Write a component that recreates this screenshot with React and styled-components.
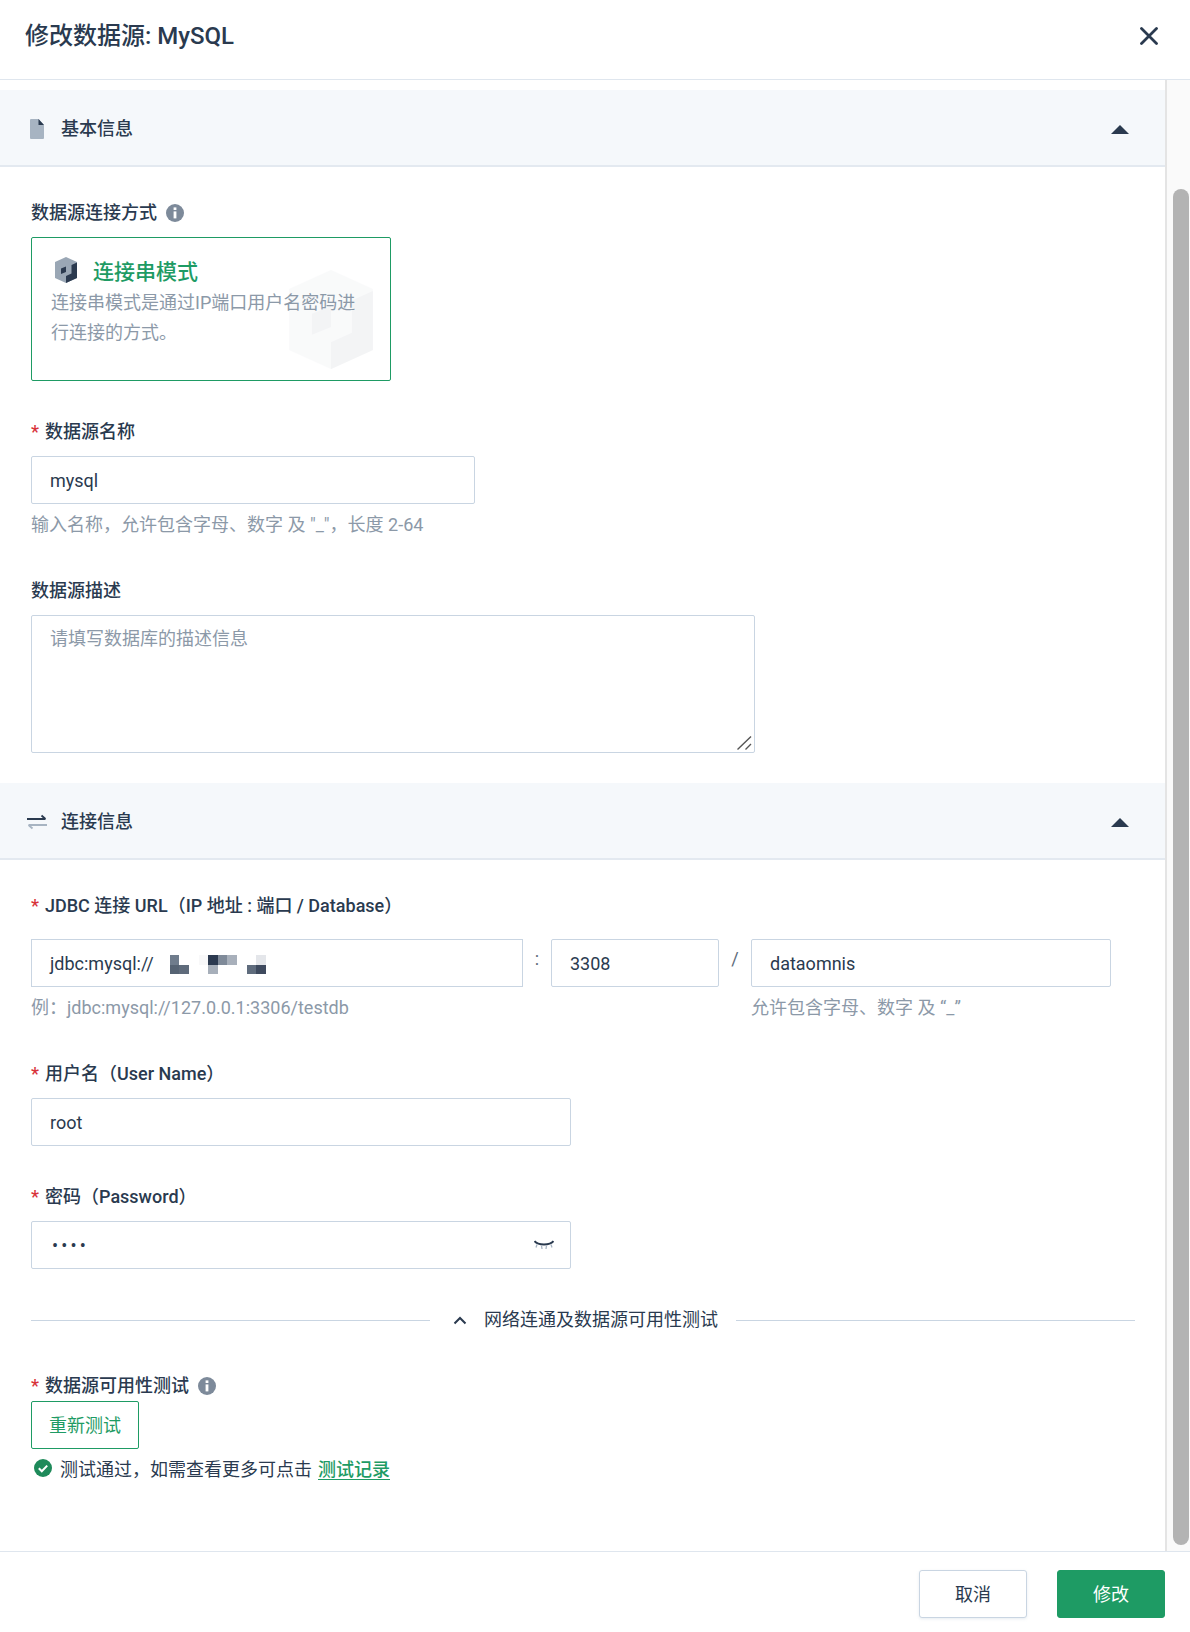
import styled, { createGlobalStyle } from 'styled-components';

const FONT = 'Roboto, "Noto Sans CJK SC", sans-serif';

const GlobalStyle = createGlobalStyle`
  html, body {
    margin: 0;
    padding: 0;
    background: #fff;
  }
  body {
    font-family: ${FONT};
    color: #2a3a4f;
    overflow: hidden;
  }
  * {
    box-sizing: border-box;
  }
`;

const Drawer = styled.div`
  display: flex;
  flex-direction: column;
  width: 1190px;
  height: 1632px;
  background: #fff;
`;

const Header = styled.header`
  display: flex;
  align-items: center;
  justify-content: space-between;
  flex: none;
  height: 80px;
  padding: 0 32px 8px 25px;
  border-bottom: 1px solid #dfe6ee;
`;

const Title = styled.h1`
  margin: 0;
  font-size: 24px;
  font-weight: 500;
  line-height: 32px;
  color: #2a3a4f;
`;

const Middle = styled.div`
  display: flex;
  flex: 1;
  min-height: 0;
`;

const Content = styled.main`
  flex: 1;
  min-width: 0;
  padding-top: 10px;
  border-right: 2px solid #e4e4e4;
`;

const ScrollTrack = styled.div`
  flex: none;
  width: 23px;
  padding: 109px 1px 6px 6px;
  background: #fafafa;
`;

const ScrollThumb = styled.div`
  height: 100%;
  border-radius: 8px;
  background: #b3b3b3;
`;

const SectionBar = styled.div`
  display: flex;
  align-items: center;
  height: 77px;
  padding: 2px 36px 0 0;
  background: #f5f8fb;
  border-bottom: 2px solid #e3e9f0;
`;

const SectionTitle = styled.span`
  flex: 1;
  font-size: 18px;
  font-weight: 500;
  line-height: 24px;
`;

const SectionBody = styled.section`
  padding: ${(p) => p.$top}px 30px ${(p) => p.$bottom}px 31px;
`;

const Field = styled.div`
  width: ${(p) => (p.$width ? `${p.$width}px` : 'auto')};
  margin-top: ${(p) => p.$top || 0}px;
`;

const Label = styled.div`
  display: flex;
  align-items: center;
  height: 24px;
  font-size: 18px;
  font-weight: 500;
  line-height: 24px;
  white-space: nowrap;
`;

const Star = styled.span`
  width: 14px;
  color: #d8333a;
`;

const Control = styled.div`
  margin-top: ${(p) => p.$top || 12}px;
`;

const TextInput = styled.input`
  display: block;
  width: 100%;
  height: 48px;
  padding: 0 18px;
  border: 1px solid #c9d5e2;
  border-radius: 2px;
  outline: none;
  background: #fff;
  font-family: ${FONT};
  font-size: 18px;
  color: #2a3a4f;
`;

const PasswordInput = styled(TextInput)`
  padding-left: 20px;
  letter-spacing: 3.2px;
`;

const AreaBox = styled.div`
  position: relative;
  margin-top: 12px;
`;

const Area = styled.textarea`
  display: block;
  width: 100%;
  height: 138px;
  padding: 9px 18px;
  border: 1px solid #c9d5e2;
  border-radius: 2px;
  outline: none;
  resize: none;
  font-family: ${FONT};
  font-size: 18px;
  line-height: 27px;
  color: #2a3a4f;
  &::placeholder {
    color: #8c99a8;
  }
`;

const ResizeGrip = styled.svg`
  position: absolute;
  right: 3px;
  bottom: 3px;
`;

const Help = styled.div`
  margin-top: 9px;
  font-size: 18px;
  line-height: 24px;
  white-space: nowrap;
  color: #8c99a8;
`;

const ModeCard = styled.div`
  position: relative;
  height: 144px;
  width: 360px;
  padding: 17px 20px 0 19px;
  overflow: hidden;
  border: 1px solid #1e9b64;
  border-radius: 2px;
`;

const ModeHead = styled.div`
  display: flex;
  align-items: center;
  gap: 16px;
  height: 30px;
  padding-left: 4px;
`;

const ModeName = styled.span`
  font-size: 21px;
  font-weight: 500;
  color: #1e9b64;
`;

const ModeText = styled.p`
  margin: 3px 0 0;
  font-size: 18px;
  line-height: 30px;
  color: #8c99a8;
`;

const Watermark = styled.svg`
  position: absolute;
  top: 32px;
  right: 16px;
  opacity: 0.05;
`;

const UrlGrid = styled.div`
  display: grid;
  grid-template-columns: 492px 28px 168px 32px 360px;
  margin-top: 21px;
`;

const Sep = styled.span`
  padding-top: 8px;
  font-size: 18px;
  line-height: 24px;
  text-align: center;
  color: #5e6b7b;
`;

const FakeInput = styled.div`
  display: flex;
  align-items: center;
  height: 48px;
  padding: 0 18px;
  border: 1px solid #c9d5e2;
  font-size: 18px;
  white-space: nowrap;
`;

const Mosaic = styled.div`
  display: grid;
  grid-template-columns: repeat(10, 9.6px);
  grid-auto-rows: 9.6px;
  margin-left: 16px;
  padding-top: 3px;
`;

const MosaicCell = styled.i`
  display: block;
  background: ${(p) => p.$color};
`;

const PasswordBox = styled.div`
  position: relative;
`;

const EyeButton = styled.svg`
  position: absolute;
  top: 19px;
  right: 17px;
`;

const DividerRow = styled.div`
  display: flex;
  align-items: center;
  height: 24px;
  margin-top: 39px;
`;

const DividerLine = styled.div`
  flex: 1;
  height: 1px;
  background: #c9d5e2;
`;

const DividerText = styled.div`
  display: flex;
  align-items: center;
  gap: 17px;
  padding: 0 18px 0 23px;
  font-size: 18px;
  line-height: 24px;
`;

const RetestButton = styled.button`
  display: block;
  width: 108px;
  height: 48px;
  margin-top: 3px;
  padding: 0 0 2px;
  border: 1px solid #1e9b64;
  border-radius: 2px;
  background: #fff;
  font-family: ${FONT};
  font-size: 18px;
  color: #1e9b64;
`;

const Status = styled.div`
  display: flex;
  align-items: center;
  gap: 8px;
  height: 24px;
  margin-top: 7px;
  padding-left: 3px;
  font-size: 18px;
`;

const TestLink = styled.a`
  margin-left: -2px;
  font-weight: 500;
  color: #1e9b64;
  text-decoration: underline;
  text-underline-offset: 3px;
`;

const Footer = styled.footer`
  display: flex;
  justify-content: flex-end;
  gap: 30px;
  flex: none;
  height: 81px;
  padding: 18px 25px 0 0;
  border-top: 1px solid #dfe6ee;
`;

const FooterButton = styled.button`
  width: 108px;
  height: 48px;
  padding: 0 0 2px;
  border: 1px solid ${(p) => (p.$primary ? '#1e9b64' : '#c9d5e2')};
  border-radius: 3px;
  background: ${(p) => (p.$primary ? '#1e9b64' : '#fff')};
  box-shadow: ${(p) => (p.$primary ? 'none' : '0 1px 3px rgba(160, 180, 200, 0.25)')};
  font-family: ${FONT};
  font-size: 18px;
  color: ${(p) => (p.$primary ? '#fff' : '#2a3a4f')};
`;

const BarIcon = styled.svg`
  flex: none;
  margin-left: ${(p) => p.$left}px;
  margin-right: ${(p) => p.$right}px;
`;

const BarArrow = styled.svg`
  flex: none;
  margin-top: 1px;
`;

const InfoMark = styled.svg`
  flex: none;
  margin-left: 9px;
`;

const InfoIcon = () => (
  <InfoMark width="18" height="18" viewBox="0 0 18 18">
    <circle cx="9" cy="9" r="9" fill="#7d8a9a" />
    <rect x="7.6" y="7.4" width="2.8" height="7" fill="#fff" />
    <rect x="7.6" y="3.4" width="2.8" height="2.6" fill="#fff" />
  </InfoMark>
);

const Arrow = () => (
  <BarArrow width="18" height="9" viewBox="0 0 18 9">
    <polygon points="9,0 18,9 0,9" fill="#2a3a4f" />
  </BarArrow>
);

const Cube = () => (
  <>
    <polygon points="11,0 22,5 22,21 11,26 0,21 0,5" fill="#9aa7b5" />
    <polygon points="22,5.5 22,21 11,26 11,19 16.5,16.5 16.5,8" fill="#2b3a4f" />
    <polygon points="6,11.5 11,9.5 11,15 6,17" fill="#2b3a4f" />
  </>
);

const mosaic = [
  '#6f7c8c', 'transparent', 'transparent', '#f8f8f9', '#2c3a50', '#7f8a99', '#a8b0bb', 'transparent', 'transparent', '#e4e6ea',
  '#566373', '#5f6b7b', 'transparent', 'transparent', '#a7afba', 'transparent', 'transparent', 'transparent', '#5f6c7d', '#3e4a5e',
];

const App = () => {
  return (
    <Drawer>
      <GlobalStyle />
      <Header>
        <Title>修改数据源: MySQL</Title>
        <svg width="18" height="18" viewBox="0 0 18 18">
          <path d="M1.5 1.5l15 15M16.5 1.5l-15 15" stroke="#2a3a4f" strokeWidth="2.8" strokeLinecap="round" />
        </svg>
      </Header>
      <Middle>
        <Content>
          <SectionBar>
            <BarIcon $left={30} $right={17} width="14" height="20" viewBox="0 0 14 20">
              <path d="M1 0h7.5L14 6v13a1 1 0 0 1-1 1H1a1 1 0 0 1-1-1V1a1 1 0 0 1 1-1z" fill="#a7b4c2" />
              <path d="M8.5 0L14 6H8.5z" fill="#2a3a4f" />
            </BarIcon>
            <SectionTitle>基本信息</SectionTitle>
            <Arrow />
          </SectionBar>
          <SectionBody $top={34} $bottom={30}>
            <Field>
              <Label>数据源连接方式<InfoIcon /></Label>
              <Control>
                <ModeCard>
                  <Watermark width="86" height="99" viewBox="0 0 22 26"><Cube /></Watermark>
                  <ModeHead>
                    <svg width="22" height="26" viewBox="0 0 22 26"><Cube /></svg>
                    <ModeName>连接串模式</ModeName>
                  </ModeHead>
                  <ModeText>连接串模式是通过IP端口用户名密码进行连接的方式。</ModeText>
                </ModeCard>
              </Control>
            </Field>
            <Field $top={39} $width={444}>
              <Label><Star>*</Star>数据源名称</Label>
              <Control><TextInput defaultValue="mysql" /></Control>
              <Help>输入名称，允许包含字母、数字 及 "_"，长度 2-64</Help>
            </Field>
            <Field $top={42} $width={724}>
              <Label>数据源描述</Label>
              <AreaBox>
                <Area placeholder="请填写数据库的描述信息" />
                <ResizeGrip width="15" height="14" viewBox="0 0 15 14">
                  <path d="M0.5 13.5L14 0.5M8.5 13.5L14 8" stroke="#555" strokeWidth="1.4" />
                </ResizeGrip>
              </AreaBox>
            </Field>
          </SectionBody>
          <SectionBar>
            <BarIcon $left={27} $right={14} width="20" height="16" viewBox="0 0 20 16">
              <path d="M0 5h18.5M14.5 1.5L18.5 5" stroke="#2a3a4f" strokeWidth="1.8" fill="none" />
              <path d="M20 11H1.5M5.5 14.5L1.5 11" stroke="#a7b4c2" strokeWidth="1.8" fill="none" />
            </BarIcon>
            <SectionTitle>连接信息</SectionTitle>
            <Arrow />
          </SectionBar>
          <SectionBody $top={34} $bottom={0}>
            <Label><Star>*</Star>JDBC 连接 URL（IP 地址 : 端口 / Database）</Label>
            <UrlGrid>
              <FakeInput>
                jdbc:mysql://
                <Mosaic>
                  {mosaic.map((color, i) => <MosaicCell key={i} $color={color} />)}
                </Mosaic>
              </FakeInput>
              <Sep>:</Sep>
              <TextInput defaultValue="3308" />
              <Sep>/</Sep>
              <TextInput defaultValue="dataomnis" />
              <Help>例：jdbc:mysql://127.0.0.1:3306/testdb</Help>
              <span />
              <span />
              <span />
              <Help>允许包含字母、数字 及 “_”</Help>
            </UrlGrid>
            <Field $top={42} $width={540}>
              <Label><Star>*</Star>用户名（User Name）</Label>
              <Control><TextInput defaultValue="root" /></Control>
            </Field>
            <Field $top={39} $width={540}>
              <Label><Star>*</Star>密码（Password）</Label>
              <Control>
                <PasswordBox>
                  <PasswordInput type="password" defaultValue="root" />
                  <EyeButton width="20" height="10" viewBox="0 0 20 10">
                    <path d="M0.5 1C4 5.5 16 5.5 19.5 1" stroke="#2a3a4f" strokeWidth="2" fill="none" />
                    <path d="M3 4.5l-1 3M7.5 5.5l.5 3.5M12.5 5.5l-.5 3.5M17 4.5l1 3" stroke="#a7b4c2" strokeWidth="1.3" fill="none" />
                  </EyeButton>
                </PasswordBox>
              </Control>
            </Field>
            <DividerRow>
              <DividerLine />
              <DividerText>
                <svg width="14" height="9" viewBox="0 0 14 9">
                  <path d="M1.5 7.5L7 2l5.5 5.5" stroke="#2a3a4f" strokeWidth="2" fill="none" />
                </svg>
                网络连通及数据源可用性测试
              </DividerText>
              <DividerLine />
            </DividerRow>
            <Field $top={42}>
              <Label><Star>*</Star>数据源可用性测试<InfoIcon /></Label>
              <RetestButton>重新测试</RetestButton>
              <Status>
                <svg width="18" height="18" viewBox="0 0 18 18">
                  <circle cx="9" cy="9" r="9" fill="#1e8a5a" />
                  <path d="M4.8 9.2l3 3 5.4-5.6" stroke="#fff" strokeWidth="2" fill="none" />
                </svg>
                测试通过，如需查看更多可点击
                <TestLink>测试记录</TestLink>
              </Status>
            </Field>
          </SectionBody>
        </Content>
        <ScrollTrack>
          <ScrollThumb />
        </ScrollTrack>
      </Middle>
      <Footer>
        <FooterButton>取消</FooterButton>
        <FooterButton $primary>修改</FooterButton>
      </Footer>
    </Drawer>
  );
};

export default App;
